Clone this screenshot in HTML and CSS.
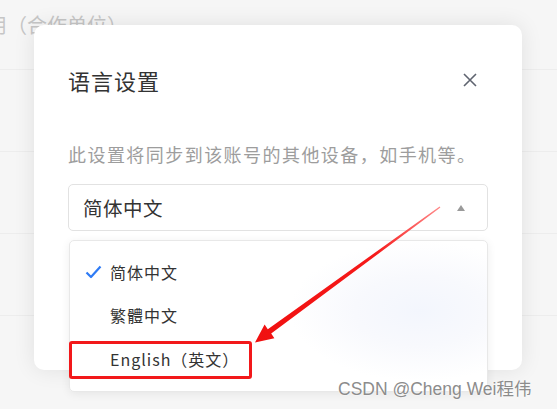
FILE: index.html
```html
<!DOCTYPE html>
<html lang="zh-CN">
<head>
<meta charset="utf-8">
<link rel="stylesheet" href="styles.css">
</head>
<body>
<div class="page">
  <div class="page-row page-row-top"><span class="page-text">用（合作单位）</span></div>
  <div class="page-row"></div>
  <div class="page-row"></div>
  <div class="page-row"></div>
</div>

<div class="modal">
  <div class="modal-header">
    <div class="modal-title">语言设置</div>
    <svg class="close" width="14" height="14" viewBox="0 0 14 14"><path d="M1 1L13 13M13 1L1 13" stroke="#5f6470" stroke-width="1.6" fill="none"/></svg>
  </div>
  <div class="modal-desc">此设置将同步到该账号的其他设备，如手机等。</div>
  <div class="select-wrap">
    <div class="select">
      <span class="select-value">简体中文</span>
      <span class="caret"></span>
    </div>
    <div class="dropdown">
      <div class="option selected">
        <svg class="check" width="17" height="14" viewBox="0 0 17 14"><path d="M1.5 7.5L6 12L15.5 1.5" stroke="#2f7bf5" stroke-width="2.2" fill="none" stroke-linejoin="round"/></svg>
        <span>简体中文</span>
      </div>
      <div class="option"><span>繁體中文</span></div>
      <div class="option"><span>English（英文）</span></div>
    </div>
  </div>
</div>

<div class="highlight"></div>
<svg class="arrow" width="557" height="409" viewBox="0 0 557 409">
  <defs>
    <linearGradient id="ag" x1="440" y1="207" x2="255" y2="342" gradientUnits="userSpaceOnUse">
      <stop offset="0" stop-color="#ff8a8a"/>
      <stop offset="0.35" stop-color="#f61a1a"/>
      <stop offset="1" stop-color="#f01010"/>
    </linearGradient>
  </defs>
  <polygon points="439.6,206.5 440.4,207.5 271.2,333.6 274.4,338.2 255,342.5 264.6,324.6 267.8,329.2" fill="url(#ag)"/>
</svg>
<div class="watermark">CSDN @Cheng Wei程伟</div>
</body>
</html>
```

FILE: styles.css
```css
* { box-sizing: border-box; }
html, body { margin: 0; padding: 0; }
body {
  width: 557px;
  height: 409px;
  overflow: hidden;
  background: #f6f6f6;
  font-family: "Noto Sans CJK SC", "Noto Sans", sans-serif;
  position: relative;
}
.page {
  display: flex;
  flex-direction: column;
}
.page-row {
  height: 82px;
  border-bottom: 1px solid #ededed;
}
.page-row-top {
  height: 70px;
  padding-top: 12px;
}
.page-text {
  display: block;
  margin-left: -13px;
  font-size: 20px;
  color: #c6c6c6;
  line-height: 26px;
}
.modal {
  position: absolute;
  left: 34px;
  top: 25px;
  width: 488px;
  height: 345px;
  background: #fff;
  border-radius: 10px;
  box-shadow: 0 0 22px rgba(0, 0, 0, 0.09);
  padding: 39px 34px 0 34px;
}
.modal-header {
  display: flex;
  align-items: center;
  justify-content: space-between;
  height: 32px;
}
.modal-title {
  font-size: 22px;
  letter-spacing: 1px;
  color: #333;
  line-height: 32px;
}
.close {
  margin-right: 11px;
}
.modal-desc {
  margin-top: 45px;
  font-size: 18px;
  letter-spacing: 1.45px;
  color: #9d9d9d;
  line-height: 26px;
  white-space: nowrap;
}
.select-wrap {
  position: relative;
  margin-top: 17px;
  width: 420px;
}
.select {
  height: 47px;
  border: 1px solid #e2e2e2;
  border-radius: 5px;
  display: flex;
  align-items: center;
  justify-content: space-between;
  padding: 0 22px 0 14px;
}
.select-value {
  font-size: 19.5px;
  letter-spacing: 0.5px;
  color: #333;
}
.caret {
  width: 0;
  height: 0;
  border-left: 4.5px solid transparent;
  border-right: 4.5px solid transparent;
  border-bottom: 6px solid #9a9a9a;
}
.dropdown {
  position: absolute;
  left: 1px;
  top: 56px;
  width: 419px;
  height: 152px;
  border: 1px solid #e8e8e8;
  border-radius: 5px;
  background: radial-gradient(ellipse 130px 70px at 350px 70px, #f3f6fd 0%, #f8f9fd 50%, #ffffff 100%);
  box-shadow: 0 2px 10px rgba(0, 0, 0, 0.07);
  padding-top: 9px;
  display: flex;
  flex-direction: column;
}
.option {
  height: 43.5px;
  display: flex;
  align-items: center;
  padding-left: 40px;
  position: relative;
  font-size: 16px;
  letter-spacing: 1px;
  color: #333;
}
.check {
  position: absolute;
  left: 15px;
  top: 15px;
}
.highlight {
  position: absolute;
  left: 69px;
  top: 341px;
  width: 183px;
  height: 38px;
  border: 3px solid #f2181a;
  border-radius: 3px;
}
.arrow {
  position: absolute;
  left: 0;
  top: 0;
}
.watermark {
  position: absolute;
  left: 338px;
  top: 378px;
  font-family: "Liberation Sans", "Noto Sans CJK SC", sans-serif;
  font-size: 17.5px;
  line-height: 22px;
  color: #8c8c8c;
  text-shadow: 0 0 2px #fff, 0 0 1px #fff;
}
```
